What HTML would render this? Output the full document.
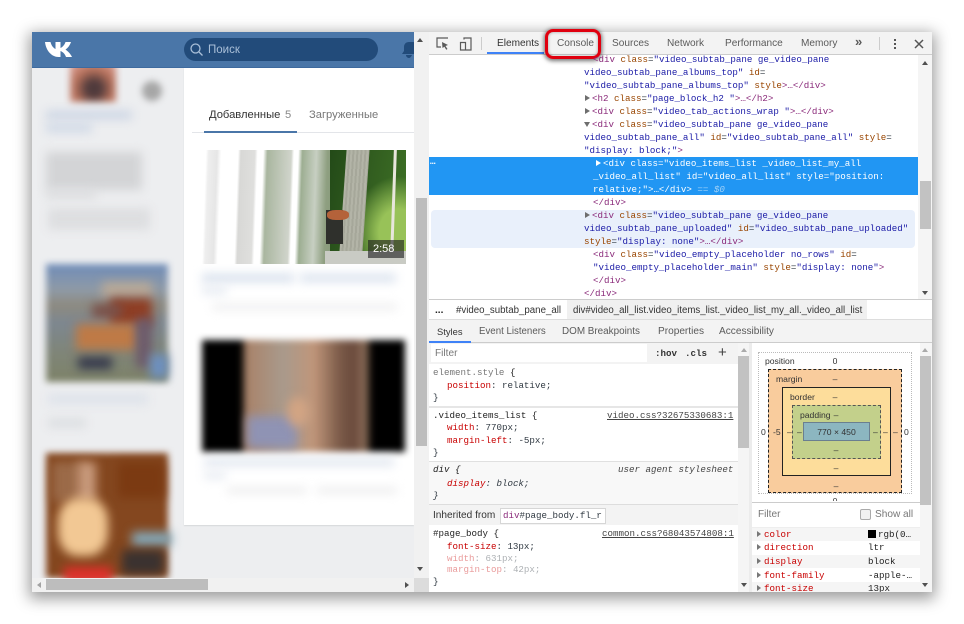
<!DOCTYPE html>
<html><head><meta charset="utf-8">
<style>
html,body{margin:0;padding:0;background:#fff}
#r{position:relative;width:964px;height:624px;overflow:hidden;background:#fff}
#r div{position:absolute}
.w{left:32px;top:32px;width:900px;height:560px;box-shadow:0 4px 14px 3px rgba(0,0,0,.38)}
.m{font:9.17px/13px "Liberation Mono",monospace;white-space:pre;color:#303942}
.u{font:10.1px/14px "Liberation Sans",sans-serif;white-space:pre;color:#5a5a5a}
.t{color:#8a2a7a}.n{color:#994500}.v{color:#1a1aa6}
.p{color:#c80000}.bk{color:#222}.f{opacity:.4}
.b{filter:blur(5px)}
.c{filter:blur(3.5px)}
.tri{width:0;height:0}
.x{font:8.6px/12px "Liberation Sans",sans-serif;color:#333;white-space:pre;text-align:center}
</style></head><body>
<div id="r">
<div class="w" style="background:#fff"></div>

<!-- VK page -->
<div style="left:32px;top:32px;width:397px;height:560px;overflow:hidden;background:#edeef0">
 <div style="left:152px;top:36px;width:230px;height:457px;background:#fff;box-shadow:0 1px 1px #d7d8db"></div>
 <!-- left blurred -->
 <div class="c" style="left:38px;top:28px;width:46px;height:42px;background:radial-gradient(circle at 52% 68%,#4f3a3c 0 18%,#b5705a 50%,#dc9f94 85%)"></div>
 <div class="c" style="left:110px;top:49px;width:20px;height:20px;border-radius:50%;background:#a6a6a6"></div>
 <div class="b" style="left:14px;top:79px;width:86px;height:8px;background:#c9d3e3"></div>
 <div class="b" style="left:14px;top:92px;width:46px;height:8px;background:#ccd6e5"></div>
 <div class="b" style="left:14px;top:120px;width:96px;height:38px;background:#d3d4d6"></div>
 <div class="b" style="left:14px;top:158px;width:50px;height:8px;background:#dadbdd"></div>
 <div class="b" style="left:16px;top:176px;width:102px;height:22px;background:#dddee0"></div>
 <!-- image 1 -->
 <div class="c" style="left:14px;top:232px;width:122px;height:118px;background:linear-gradient(180deg,#6f8cb8 0,#8f9aa6 22%,#8d8a80 35%,#7d8790 50%,#7f8578 75%,#7d8268 100%)"></div>
 <div class="b" style="left:70px;top:250px;width:50px;height:16px;background:#b8a998"></div>
 <div class="b" style="left:78px;top:266px;width:42px;height:28px;background:#8f3e24"></div>
 <div class="b" style="left:60px;top:272px;width:30px;height:14px;background:#7a5048"></div>
 <div class="b" style="left:44px;top:292px;width:62px;height:26px;background:#bf7a46"></div>
 <div class="b" style="left:104px;top:286px;width:16px;height:50px;background:#6d5a6a"></div>
 <div class="b" style="left:46px;top:325px;width:34px;height:12px;background:#33364a"></div>
 <div class="b" style="left:118px;top:322px;width:18px;height:24px;background:#6d90c0"></div>
 <div class="b" style="left:16px;top:362px;width:100px;height:10px;background:#dde2ea"></div>
 <div class="b" style="left:16px;top:387px;width:38px;height:8px;background:#d9dcdf"></div>
 <!-- image 2 -->
 <div class="c" style="left:14px;top:421px;width:122px;height:125px;background:#84471f"></div>
 <div class="b" style="left:20px;top:430px;width:32px;height:40px;background:#9b6a48"></div>
 <div class="b" style="left:46px;top:430px;width:18px;height:40px;background:#c89a7c"></div>
 <div class="b" style="left:86px;top:430px;width:46px;height:36px;background:#7b3a12"></div>
 <div class="b" style="left:26px;top:466px;width:50px;height:58px;background:#f2c894;border-radius:40%"></div>
 <div class="b" style="left:100px;top:500px;width:40px;height:14px;background:#84a8b8"></div>
 <div class="b" style="left:90px;top:518px;width:42px;height:24px;background:#3a3230"></div>
 <div class="b" style="left:32px;top:535px;width:48px;height:16px;background:#e02f2a"></div>
 <!-- header -->
 <div style="left:0;top:0;width:382px;height:35px;background:#4a76a8;border-bottom:1px solid #3e6a9e"></div>
 <svg style="position:absolute;left:13px;top:9px" width="28" height="17" viewBox="0 0 28 17"><path fill="#fff" d="M0 1h5.500c1 4 3 6 5 7V1h5v6c2-1 4-3 5-6h5.500c-1 3-3 6-5.500 7.500 2 1.500 5 4 6.500 7.500h-6c-1-3-3-5-5.500-6v6h-2C7 16 1 10 0 1z"/></svg>
 <div style="left:152px;top:6px;width:194px;height:23px;border-radius:12px;background:#224b7a"></div>
 <svg style="position:absolute;left:157px;top:10px" width="15" height="15" viewBox="0 0 15 15"><circle cx="6.500" cy="6.500" r="4.500" fill="none" stroke="#a9bfd8" stroke-width="1.300"/><path d="M10 10l3.500 3.500" stroke="#a9bfd8" stroke-width="1.300"/></svg>
 <div style="left:176px;top:11px;font:11.500px/14px 'Liberation Sans',sans-serif;color:#a9bfd8">Поиск</div>
 <svg style="position:absolute;left:370px;top:9px" width="12" height="17" viewBox="0 0 12 17"><path fill="#224b7a" d="M7 1C4 1 2 3 2 6v4l-2 3h12V1zM4 14c0 2 2 3 3 3s2-1 3-3z"/></svg>
 <!-- tabs -->
 <div style="left:177px;top:76px;font:11.200px/14px 'Liberation Sans',sans-serif;color:#333">Добавленные</div>
 <div style="left:253px;top:76px;font:11.200px/14px 'Liberation Sans',sans-serif;color:#888">5</div>
 <div style="left:277px;top:76px;font:11.200px/14px 'Liberation Sans',sans-serif;color:#777">Загруженные</div>
 <div style="left:160px;top:100px;width:222px;height:1px;background:#e3e5e9"></div>
 <div style="left:172px;top:99px;width:93px;height:2px;background:#4a76a8"></div>
 <!-- thumb 1 -->
 <div style="left:169px;top:118px;width:205px;height:114px;overflow:hidden;background:#fff">
  <div style="left:-4px;top:0;width:140px;height:114px;transform:skewX(-2deg);background:linear-gradient(90deg,#fff 0,#fff 5%,#eee 7%,#e6e6e6 13%,#fff 16%,#fff 28%,#d8d8d6 30%,#dfdfdd 40%,#fff 42%,#fff 46%,#a9b69f 49%,#d0d4cb 66%,#fff 68%,#fff 71%,#9dae92 74%,#c7cfc2 84%,#8e9f80 92%,#86987a 100%)"></div>
  <div style="left:129px;top:0;width:76px;height:114px;background:radial-gradient(ellipse at 90% 72%,#98c258 0 20%,rgba(120,170,70,0) 48%),linear-gradient(100deg,#234a18,#335f20 50%,#3f7426 100%)"></div>
  <div style="left:142px;top:0;width:23px;height:102px;background:repeating-linear-gradient(90deg,#b3b4a7 0 2px,#a6a79a 2px 4px);transform:skewX(-4deg)"></div>
  <div style="left:125px;top:60px;width:17px;height:34px;background:#2f302c"></div>
  <div style="left:126px;top:60px;width:22px;height:10px;background:#b4623a;border-radius:40%"></div>
  <div style="left:191px;top:0;width:3px;height:106px;background:#e8e6dc;transform:skewX(-2deg)"></div>
  <div style="left:124px;top:101px;width:81px;height:13px;background:#c9cbc4"></div>
  <div style="left:167px;top:90px;width:36px;height:18px;background:rgba(30,30,30,.62)"></div>
  <div style="left:172px;top:91px;font:11px/16px 'Liberation Sans',sans-serif;color:#fff">2:58</div>
 </div>
 <div class="b" style="left:170px;top:242px;width:92px;height:8px;background:#d5deeb"></div>
 <div class="b" style="left:268px;top:242px;width:96px;height:8px;background:#d8e1ed"></div>
 <div class="b" style="left:170px;top:255px;width:25px;height:7px;background:#e3e8f0"></div>
 <div class="b" style="left:180px;top:272px;width:185px;height:6px;background:#ededee"></div>
 <!-- thumb 2 -->
 <div class="c" style="left:170px;top:308px;width:203px;height:112px;background:linear-gradient(90deg,#000 0,#000 19%,#a9836a 22%,#a99a8c 40%,#c0967a 55%,#7a5a48 68%,#6a4a3c 75%,#8a6d58 80%,#000 84%,#000 100%)"></div>
 <div class="b" style="left:215px;top:384px;width:50px;height:32px;background:#8f93b4"></div>
 <div class="b" style="left:255px;top:365px;width:22px;height:30px;background:#d2a483;border-radius:50%"></div>
 <div class="b" style="left:172px;top:426px;width:190px;height:8px;background:#e0e6ef"></div>
 <div class="b" style="left:172px;top:440px;width:22px;height:7px;background:#e6eaf1"></div>
 <div class="b" style="left:195px;top:456px;width:80px;height:5px;background:#e7e7e8"></div>
 <div class="b" style="left:285px;top:456px;width:80px;height:5px;background:#e7e7e8"></div>
 <!-- v scroll -->
 <div style="left:382px;top:0;width:15px;height:546px;background:#f1f1f1"></div>
 <div style="left:384px;top:166px;width:11px;height:248px;background:#bdbdbd"></div>
 <div class="tri" style="left:385px;top:6px;border:3px solid transparent;border-bottom:4px solid #505050;border-top:0"></div>
 <div class="tri" style="left:385px;top:535px;border:3px solid transparent;border-top:4px solid #505050;border-bottom:0"></div>
 <!-- h scroll -->
 <div style="left:0;top:546px;width:382px;height:14px;background:#f1f1f1"></div>
 <div style="left:14px;top:547px;width:162px;height:11px;background:#bdbdbd"></div>
 <div class="tri" style="left:5px;top:550px;border:3px solid transparent;border-right:4px solid #a3a3a3;border-left:0"></div>
 <div class="tri" style="left:373px;top:550px;border:3px solid transparent;border-left:4px solid #505050;border-right:0"></div>
 <div style="left:382px;top:546px;width:15px;height:14px;background:#dcdcdc"></div>
</div>

<!-- Devtools -->
<div style="left:429px;top:32px;width:503px;height:560px;background:#fff;overflow:hidden"></div>
<div style="left:429px;top:32px;width:503px;height:22px;background:#f3f3f3;border-bottom:1px solid #ccc"></div>
<svg style="position:absolute;left:436px;top:37px" width="14" height="14" viewBox="0 0 14 14"><path d="M12 1H1v9h4" fill="none" stroke="#5a5a5a" stroke-width="1.200"/><path d="M6 5l6 3-2.500 1 2 3-1.300.7-1.800-3L6.500 11z" fill="#5a5a5a"/></svg>
<svg style="position:absolute;left:459px;top:37px" width="14" height="14" viewBox="0 0 14 14"><path d="M5 2.500V1h7v12H5M1.500 5.500h5v7.500h-5z" fill="none" stroke="#5a5a5a" stroke-width="1.200"/></svg>
<div style="left:481px;top:37px;width:1px;height:13px;background:#ccc"></div>
<div class="u" style="left:497px;top:37px;color:#333">Elements</div>
<div style="left:487px;top:52px;width:57px;height:2px;background:#3e82f7"></div>
<div class="u" style="left:557px;top:37px">Console</div>
<div class="u" style="left:612px;top:37px">Sources</div>
<div class="u" style="left:667px;top:37px">Network</div>
<div class="u" style="left:725px;top:37px">Performance</div>
<div class="u" style="left:801px;top:37px">Memory</div>
<div class="u" style="left:855px;top:35px;font-weight:bold;font-size:13px">»</div>
<div style="left:879px;top:37px;width:1px;height:13px;background:#ccc"></div>
<div style="left:894px;top:39px;width:2px;height:2px;background:#555;box-shadow:0 4px 0 #555,0 8px 0 #555"></div>
<svg style="position:absolute;left:914px;top:39px" width="10" height="10" viewBox="0 0 10 10"><path d="M1 1l8 8M9 1l-8 8" stroke="#555" stroke-width="1.500"/></svg>
<div style="left:545px;top:29px;width:50px;height:24px;border:3px solid #e0000f;border-radius:8px;box-shadow:0 1px 4px 1px rgba(0,0,0,.55),inset 0 0 3px rgba(0,0,0,.35)"></div>

<!-- elements tree -->
<div style="left:429px;top:157px;width:489px;height:38px;background:#2196f3"></div>
<div style="left:431px;top:210px;width:484px;height:38px;background:#e9f0fb;border-radius:4px"></div>
<div class="m" style="left:593px;top:53px"><span class="t">&lt;div</span> <span class="n">class</span>=<span class="v">"video_subtab_pane ge_video_pane</span></div>
<div class="m" style="left:584px;top:66px"><span class="v">video_subtab_pane_albums_top"</span> <span class="n">id</span>=</div>
<div class="m" style="left:584px;top:79px"><span class="v">"video_subtab_pane_albums_top"</span> <span class="n">style</span><span class="t">&gt;…&lt;/div&gt;</span></div>
<div class="m" style="left:592px;top:92px"><span class="t">&lt;h2</span> <span class="n">class</span>=<span class="v">"page_block_h2 "</span><span class="t">&gt;…&lt;/h2&gt;</span></div>
<div class="m" style="left:592px;top:105px"><span class="t">&lt;div</span> <span class="n">class</span>=<span class="v">"video_tab_actions_wrap "</span><span class="t">&gt;…&lt;/div&gt;</span></div>
<div class="m" style="left:592px;top:118px"><span class="t">&lt;div</span> <span class="n">class</span>=<span class="v">"video_subtab_pane ge_video_pane</span></div>
<div class="m" style="left:584px;top:131px"><span class="v">video_subtab_pane_all"</span> <span class="n">id</span>=<span class="v">"video_subtab_pane_all"</span> <span class="n">style</span>=</div>
<div class="m" style="left:584px;top:144px"><span class="v">"display: block;"</span><span class="t">&gt;</span></div>
<div class="m" style="left:603px;top:157px;color:#fff">&lt;div class="video_items_list _video_list_my_all</div>
<div class="m" style="left:593px;top:170px;color:#fff">_video_all_list" id="video_all_list" style="position:</div>
<div class="m" style="left:593px;top:183px;color:#fff">relative;"&gt;…&lt;/div&gt; <span style="color:#9fd0f7">== <i>$0</i></span></div>
<div class="m" style="left:593px;top:196px"><span class="t">&lt;/div&gt;</span></div>
<div class="m" style="left:592px;top:209px"><span class="t">&lt;div</span> <span class="n">class</span>=<span class="v">"video_subtab_pane ge_video_pane</span></div>
<div class="m" style="left:584px;top:222px"><span class="v">video_subtab_pane_uploaded"</span> <span class="n">id</span>=<span class="v">"video_subtab_pane_uploaded"</span></div>
<div class="m" style="left:584px;top:235px"><span class="n">style</span>=<span class="v">"display: none"</span><span class="t">&gt;…&lt;/div&gt;</span></div>
<div class="m" style="left:593px;top:248px"><span class="t">&lt;div</span> <span class="n">class</span>=<span class="v">"video_empty_placeholder no_rows"</span> <span class="n">id</span>=</div>
<div class="m" style="left:593px;top:261px"><span class="v">"video_empty_placeholder_main"</span> <span class="n">style</span>=<span class="v">"display: none"</span><span class="t">&gt;</span></div>
<div class="m" style="left:593px;top:274px"><span class="t">&lt;/div&gt;</span></div>
<div class="m" style="left:584px;top:287px"><span class="t">&lt;/div&gt;</span></div>
<div class="tri" style="left:585px;top:95px;border:3px solid transparent;border-left:5px solid #6e6e6e;border-right:0"></div>
<div class="tri" style="left:585px;top:108px;border:3px solid transparent;border-left:5px solid #6e6e6e;border-right:0"></div>
<div class="tri" style="left:584px;top:122px;border:3px solid transparent;border-top:5px solid #6e6e6e;border-bottom:0"></div>
<div class="tri" style="left:596px;top:160px;border:3px solid transparent;border-left:5px solid #fff;border-right:0"></div>
<div class="tri" style="left:585px;top:212px;border:3px solid transparent;border-left:5px solid #6e6e6e;border-right:0"></div>
<div class="m" style="left:430px;top:155px;color:#fff;font-weight:bold">…</div>
<!-- tree scrollbar -->
<div style="left:918px;top:55px;width:14px;height:244px;background:#f5f5f5"></div>
<div style="left:920px;top:181px;width:11px;height:48px;background:#c2c2c2"></div>
<div class="tri" style="left:922px;top:61px;border:3px solid transparent;border-bottom:4px solid #505050;border-top:0"></div>
<div class="tri" style="left:922px;top:291px;border:3px solid transparent;border-top:4px solid #505050;border-bottom:0"></div>
<!-- breadcrumbs -->
<div style="left:429px;top:299px;width:503px;height:1px;background:#ccc"></div>
<div style="left:567px;top:300px;width:300px;height:19px;background:#f0f0f0"></div>
<div class="u" style="left:435px;top:304px;font-weight:bold;color:#222">...</div>
<div class="u" style="left:456px;top:304px;color:#333;font-size:9.700px">#video_subtab_pane_all</div>
<div class="u" style="left:573px;top:304px;color:#333;font-size:9.670px">div#video_all_list.video_items_list._video_list_my_all._video_all_list</div>
<!-- sub tabs -->
<div style="left:429px;top:319px;width:503px;height:24px;background:#f3f3f3;border-top:1px solid #ddd;box-sizing:border-box;border-bottom:1px solid #ccc"></div>
<div class="u" style="left:437px;top:325px;color:#333;font-size:9.400px">Styles</div>
<div class="u" style="left:479px;top:325px;font-size:9.700px">Event Listeners</div>
<div class="u" style="left:562px;top:325px;font-size:9.900px">DOM Breakpoints</div>
<div class="u" style="left:658px;top:325px">Properties</div>
<div class="u" style="left:719px;top:325px">Accessibility</div>
<div style="left:429px;top:341px;width:42px;height:2px;background:#3e82f7"></div>
<!-- styles pane -->
<div style="left:429px;top:343px;width:309px;height:21px;background:#f3f3f3"></div>
<div style="left:431px;top:344px;width:216px;height:18px;background:#fff"></div>
<div class="u" style="left:435px;top:347px;color:#777">Filter</div>
<div class="m" style="left:655px;top:347px;color:#333;font-weight:bold">:hov</div>
<div class="m" style="left:685px;top:347px;color:#333;font-weight:bold">.cls</div>
<div class="u" style="left:718px;top:346px;font-size:15px;color:#444">+</div>
<div class="m" style="left:433px;top:366px;color:#777">element.style <span class="bk">{</span></div>
<div class="m" style="left:447px;top:379px"><span class="p">position</span>: relative;</div>
<div class="m" style="left:433px;top:391px">}</div>
<div style="left:429px;top:406px;width:309px;height:2px;background:#e6e6e6"></div>
<div class="m" style="left:433px;top:409px;color:#222">.video_items_list {</div>
<div class="m" style="left:607px;top:409px;color:#444;text-decoration:underline">video.css?32675330683:1</div>
<div class="m" style="left:447px;top:421px"><span class="p">width</span>: 770px;</div>
<div class="m" style="left:447px;top:434px"><span class="p">margin-left</span>: -5px;</div>
<div class="m" style="left:433px;top:446px">}</div>
<div style="left:429px;top:461px;width:309px;height:43px;background:#f8f8f8;border-top:1px solid #e0e0e0"></div>
<div class="m" style="left:433px;top:463px;color:#222;font-style:italic">div {</div>
<div class="m" style="left:618px;top:463px;color:#444;font-style:italic">user agent stylesheet</div>
<div class="m" style="left:447px;top:477px;font-style:italic"><span class="p">display</span>: block;</div>
<div class="m" style="left:433px;top:489px;font-style:italic">}</div>
<div style="left:429px;top:504px;width:309px;height:21px;background:#f3f3f3;border-top:1px solid #ddd;box-sizing:border-box"></div>
<div class="u" style="left:433px;top:509px;color:#333">Inherited from</div>
<div style="left:500px;top:508px;width:104px;height:14px;background:#fff;border:1px solid #d6d6d6"></div>
<div class="m" style="left:503px;top:509px"><span class="t">div</span>#page_body.fl_r</div>
<div class="m" style="left:433px;top:527px;color:#222">#page_body {</div>
<div class="m" style="left:602px;top:527px;color:#444;text-decoration:underline">common.css?68043574808:1</div>
<div class="m" style="left:447px;top:540px"><span class="p">font-size</span>: 13px;</div>
<div class="m f" style="left:447px;top:552px"><span class="p">width</span>: 631px;</div>
<div class="m f" style="left:447px;top:563px"><span class="p">margin-top</span>: 42px;</div>
<div class="m" style="left:433px;top:575px">}</div>
<!-- styles scrollbar -->
<div style="left:738px;top:343px;width:11px;height:249px;background:#f5f5f5"></div>
<div style="left:738px;top:356px;width:11px;height:92px;background:#c2c2c2"></div>
<div class="tri" style="left:741px;top:348px;border:3px solid transparent;border-bottom:4px solid #aaa;border-top:0"></div>
<div class="tri" style="left:741px;top:583px;border:3px solid transparent;border-top:4px solid #505050;border-bottom:0"></div>
<div style="left:749px;top:343px;width:3px;height:249px;background:#ececec"></div>
<!-- box model -->
<div style="left:758px;top:352px;width:152px;height:140px;border:1px dotted #bbb;background:#fff"></div>
<div style="left:768px;top:369px;width:132px;height:122px;background:#f9cc9d;border:1px dashed #222"></div>
<div style="left:782px;top:387px;width:107px;height:87px;background:#fddd9b;border:1px solid #222"></div>
<div style="left:792px;top:405px;width:87px;height:52px;background:#c3d08b;border:1px dashed #555"></div>
<div style="left:803px;top:422px;width:65px;height:17px;background:#8cb6c0;border:1px solid #6a7f90"></div>
<div class="x" style="left:765px;top:355px">position</div>
<div class="x" style="left:832px;top:355px;width:6px">0</div>
<div class="x" style="left:776px;top:373px">margin</div>
<div class="x" style="left:832px;top:373px;width:6px">–</div>
<div class="x" style="left:790px;top:391px">border</div>
<div class="x" style="left:832px;top:391px;width:6px">–</div>
<div class="x" style="left:800px;top:409px">padding</div>
<div class="x" style="left:832px;top:409px;width:8px">–</div>
<div class="x" style="left:803px;top:426px;width:67px">770 × 450</div>
<div class="x" style="left:761px;top:426px">0</div>
<div class="x" style="left:773px;top:426px">-5</div>
<div class="x" style="left:787px;top:426px">–</div>
<div class="x" style="left:797px;top:426px">–</div>
<div class="x" style="left:873px;top:426px">–</div>
<div class="x" style="left:883px;top:426px">–</div>
<div class="x" style="left:893px;top:426px">–</div>
<div class="x" style="left:904px;top:426px">0</div>
<div class="x" style="left:832px;top:444px;width:8px">–</div>
<div class="x" style="left:832px;top:462px;width:8px">–</div>
<div class="x" style="left:832px;top:480px;width:8px">–</div>
<div class="x" style="left:832px;top:495px;width:6px;height:6px;overflow:hidden">0</div>
<div style="left:752px;top:502px;width:168px;height:1px;background:#ccc"></div>
<div class="u" style="left:758px;top:508px;color:#777">Filter</div>
<div style="left:860px;top:509px;width:9px;height:9px;background:#f0f0f0;border:1px solid #aaa;border-radius:2px"></div>
<div class="u" style="left:875px;top:508px;color:#777">Show all</div>
<div style="left:752px;top:527px;width:168px;height:1px;background:#eee"></div>
<div style="left:752px;top:528px;width:168px;height:13px;background:#f5f5f5"></div>
<div style="left:752px;top:555px;width:168px;height:13px;background:#f5f5f5"></div>
<div style="left:752px;top:582px;width:168px;height:10px;background:#f5f5f5"></div>
<div class="m" style="left:764px;top:528px;color:#c80000">color</div>
<div class="m" style="left:764px;top:541px;color:#c80000">direction</div>
<div class="m" style="left:764px;top:555px;color:#c80000">display</div>
<div class="m" style="left:764px;top:569px;color:#c80000">font-family</div>
<div style="left:764px;top:582px;width:100px;height:10px;overflow:hidden"><div class="m" style="left:0;top:0;color:#c80000">font-size</div></div>
<div style="left:868px;top:530px;width:8px;height:8px;background:#000"></div>
<div class="m" style="left:878px;top:528px;color:#222">rgb(0…</div>
<div class="m" style="left:868px;top:541px;color:#222">ltr</div>
<div class="m" style="left:868px;top:555px;color:#222">block</div>
<div class="m" style="left:868px;top:569px;color:#222">-apple-…</div>
<div style="left:868px;top:582px;width:50px;height:10px;overflow:hidden"><div class="m" style="left:0;top:0;color:#222">13px</div></div>
<div class="tri" style="left:757px;top:531px;border:3px solid transparent;border-left:4px solid #777;border-right:0"></div>
<div class="tri" style="left:757px;top:544px;border:3px solid transparent;border-left:4px solid #777;border-right:0"></div>
<div class="tri" style="left:757px;top:558px;border:3px solid transparent;border-left:4px solid #777;border-right:0"></div>
<div class="tri" style="left:757px;top:572px;border:3px solid transparent;border-left:4px solid #777;border-right:0"></div>
<div class="tri" style="left:757px;top:585px;border:3px solid transparent;border-left:4px solid #777;border-right:0"></div>
<!-- right scrollbar -->
<div style="left:920px;top:343px;width:12px;height:249px;background:#f5f5f5"></div>
<div style="left:920px;top:356px;width:11px;height:149px;background:#c2c2c2"></div>
<div class="tri" style="left:922px;top:348px;border:3px solid transparent;border-bottom:4px solid #aaa;border-top:0"></div>
<div class="tri" style="left:922px;top:583px;border:3px solid transparent;border-top:4px solid #505050;border-bottom:0"></div>
</div>
</body></html>
